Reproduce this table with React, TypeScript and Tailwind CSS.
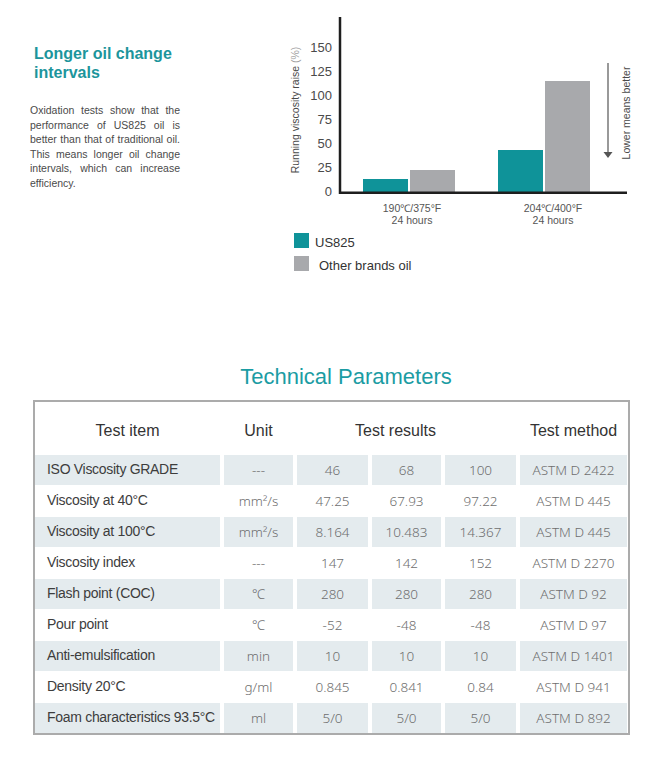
const TEAL = "#0f9399";
const GREY = "#a8a9ac";

const ROWS: string[][] = [
  ["ISO Viscosity GRADE", "---", "46", "68", "100", "ASTM D 2422"],
  ["Viscosity at 40°C", "mm²/s", "47.25", "67.93", "97.22", "ASTM D 445"],
  ["Viscosity at 100°C", "mm²/s", "8.164", "10.483", "14.367", "ASTM D 445"],
  ["Viscosity index", "---", "147", "142", "152", "ASTM D 2270"],
  ["Flash point (COC)", "℃", "280", "280", "280", "ASTM D 92"],
  ["Pour point", "℃", "-52", "-48", "-48", "ASTM D 97"],
  ["Anti-emulsification", "min", "10", "10", "10", "ASTM D 1401"],
  ["Density 20°C", "g/ml", "0.845", "0.841", "0.84", "ASTM D 941"],
  ["Foam characteristics 93.5°C", "ml", "5/0", "5/0", "5/0", "ASTM D 892"],
];

const TICKS = [150, 125, 100, 75, 50, 25, 0];

function Chart() {
  // y = 191 - value * 0.96
  return (
    <svg width="382" height="228" viewBox="0 0 382 228" className="block">
      <text
        transform="translate(19 110) rotate(-90)"
        textAnchor="middle"
        fontSize="10.5"
        fill="#4a4a4a"
        fontFamily="Liberation Sans, Arial, sans-serif"
      >
        Running viscosity raise <tspan fill="#a0a0a0">(%)</tspan>
      </text>
      {TICKS.map((t) => (
        <text
          key={t}
          x="52"
          y={191 - t * 0.96 + 4.5}
          textAnchor="end"
          fontSize="13"
          fill="#4a4a4a"
          fontFamily="Liberation Sans, Arial, sans-serif"
        >
          {t}
        </text>
      ))}
      <rect x="83" y="179" width="45" height="13" fill={TEAL} />
      <rect x="130" y="170" width="45" height="22" fill={GREY} />
      <rect x="218" y="150" width="45" height="42" fill={TEAL} />
      <rect x="265" y="81" width="45" height="111" fill={GREY} />
      <line x1="60" y1="17" x2="60" y2="194" stroke="#1e1e1e" strokeWidth="2.5" />
      <line x1="59" y1="192.8" x2="347" y2="192.8" stroke="#1e1e1e" strokeWidth="2.5" />
      <g fontSize="10.5" fill="#555" textAnchor="middle" fontFamily="Liberation Sans, Arial, sans-serif">
        <text x="132" y="212">190℃/375°F</text>
        <text x="132" y="224">24 hours</text>
        <text x="273" y="212">204℃/400°F</text>
        <text x="273" y="224">24 hours</text>
      </g>
      <line x1="328" y1="63" x2="328" y2="153" stroke="#555" strokeWidth="1.2" />
      <polygon points="323.5,152 332.5,152 328,158" fill="#555" />
      <text
        transform="translate(350 113) rotate(-90)"
        textAnchor="middle"
        fontSize="10.5"
        fill="#4a4a4a"
        fontFamily="Liberation Sans, Arial, sans-serif"
      >
        Lower means better
      </text>
    </svg>
  );
}

export default function App() {
  return (
    <main className="w-[662px] h-[761px] bg-white font-['Liberation_Sans',Arial,sans-serif] overflow-hidden">
      <div className="flex h-[300px]">
        <div className="w-[280px] pt-[44px]">
          <h1 className="pl-[34px] w-[200px] text-[16px] leading-[19px] font-bold text-[#1c959c]">
            Longer oil change intervals
          </h1>
          <p className="ml-[30px] mt-[21px] w-[150px] text-[10.5px] leading-[14.6px] text-[#4a4a4a] text-justify">
            Oxidation tests show that the performance of US825 oil is better than that of traditional oil.
            This means longer oil change intervals, which can increase efficiency.
          </p>
        </div>
        <div className="w-[382px]">
          <Chart />
          <div className="ml-[14px] mt-[5px] flex flex-col">
            <div className="h-[23px] flex items-start gap-[6px]">
              <span className="w-[15px] h-[15px] bg-[#0f9399]" />
              <span className="pt-[2px] text-[13px] leading-[15px] text-[#333]">US825</span>
            </div>
            <div className="h-[23px] flex items-start gap-[10px]">
              <span className="w-[15px] h-[15px] bg-[#a8a9ac]" />
              <span className="pt-[2px] text-[13px] leading-[15px] text-[#333]">Other brands oil</span>
            </div>
          </div>
        </div>
      </div>

      <h2 className="mt-[63px] pl-[30px] text-center text-[22px] leading-[28px] text-[#1b9ca3]">
        Technical Parameters
      </h2>

      <div className="ml-[33px] mt-[9px] w-[597px] border-2 border-[#ababab]">
        <div className="grid grid-cols-[185px_69px_71px_69px_71px_107px] gap-x-[4px] gap-y-[1px]">
          <div className="h-[52px] pt-[5px] flex items-center justify-center text-[16px] text-[#333]">Test item</div>
          <div className="h-[52px] pt-[5px] flex items-center justify-center text-[16px] text-[#333]">Unit</div>
          <div className="col-span-3 h-[52px] pt-[5px] pr-[22px] flex items-center justify-center text-[16px] text-[#333]">
            Test results
          </div>
          <div className="h-[52px] pt-[5px] flex items-center justify-center text-[16px] text-[#333]">Test method</div>
          {ROWS.map((row, i) =>
            row.map((cell, j) => (
              <div
                key={i + "-" + j}
                className={`h-[30px] flex items-center whitespace-nowrap ${i % 2 === 0 ? "bg-[#e4ebee]" : "bg-white"} ${
                  j === 0
                    ? "pl-[12px] pb-[1px] text-[14px] tracking-[-0.3px] text-[#3d3d3d]"
                    : "justify-center font-['Noto_Sans',sans-serif] font-light text-[13.5px] text-[#6e6e6e]"
                }`}
              >
                {cell}
              </div>
            ))
          )}
        </div>
      </div>
    </main>
  );
}
